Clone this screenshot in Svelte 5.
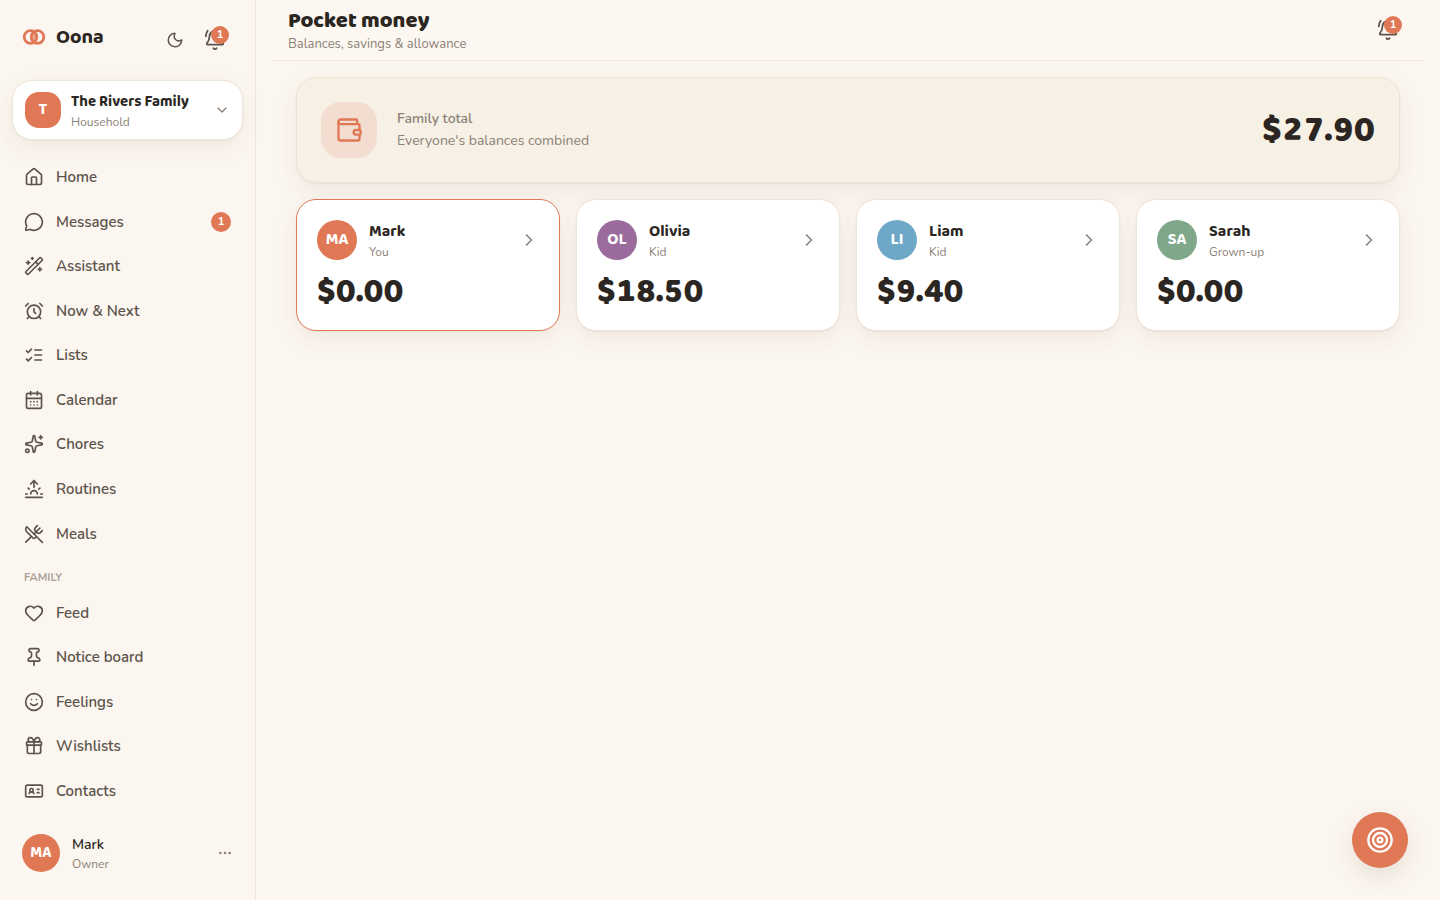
<script lang="ts">
type NavItem = { label: string; icon: string; badge?: number };
type Member = { name: string; role: string; initials: string; color: string; balance: number; me?: boolean };

const mainNav: NavItem[] = [
    { label: 'Home', icon: 'house' },
    { label: 'Messages', icon: 'message', badge: 1 },
    { label: 'Assistant', icon: 'wand' },
    { label: 'Now & Next', icon: 'alarm' },
    { label: 'Lists', icon: 'list' },
    { label: 'Calendar', icon: 'calendar' },
    { label: 'Chores', icon: 'sparkles' },
    { label: 'Routines', icon: 'sunrise' },
    { label: 'Meals', icon: 'utensils' }
];

const familyNav: NavItem[] = [
    { label: 'Feed', icon: 'heart' },
    { label: 'Notice board', icon: 'pin' },
    { label: 'Feelings', icon: 'smile' },
    { label: 'Wishlists', icon: 'gift' },
    { label: 'Contacts', icon: 'card' }
];

const members: Member[] = [
    { name: 'Mark', role: 'You', initials: 'MA', color: '#e07856', balance: 0, me: true },
    { name: 'Olivia', role: 'Kid', initials: 'OL', color: '#9b6b9e', balance: 18.5 },
    { name: 'Liam', role: 'Kid', initials: 'LI', color: '#6fa8c7', balance: 9.4 },
    { name: 'Sarah', role: 'Grown-up', initials: 'SA', color: '#7fa88b', balance: 0 }
];

// 24x24 stroke icons, one entry per path
const icons: Record<string, string[]> = {
    house: [
        'M15 21v-8a1 1 0 0 0-1-1h-4a1 1 0 0 0-1 1v8',
        'M3 10a2 2 0 0 1 .709-1.528l7-5.999a2 2 0 0 1 2.582 0l7 5.999A2 2 0 0 1 21 10v9a2 2 0 0 1-2 2H5a2 2 0 0 1-2-2z'
    ],
    message: [
        'M2.992 16.342a2 2 0 0 1 .094 1.167l-1.065 3.29a1 1 0 0 0 1.236 1.168l3.413-.998a2 2 0 0 1 1.099.092 10 10 0 1 0-4.777-4.719'
    ],
    wand: [
        'm21.64 3.64-1.28-1.28a1.21 1.21 0 0 0-1.72 0L2.36 18.64a1.21 1.21 0 0 0 0 1.72l1.28 1.28a1.2 1.2 0 0 0 1.72 0L21.64 5.36a1.2 1.2 0 0 0 0-1.72',
        'm14 7 3 3', 'M5 6v4', 'M19 14v4', 'M10 2v2', 'M7 8H3', 'M21 16h-4', 'M11 3H9'
    ],
    alarm: [
        'M4 13a8 8 0 1 0 16 0a8 8 0 1 0-16 0',
        'M12 9v4l2 2', 'M5 3 2 6', 'm22 6-3-3', 'M6.38 18.7 4 21', 'M17.64 18.67 20 21'
    ],
    list: ['m3 17 2 2 4-4', 'm3 7 2 2 4-4', 'M13 6h8', 'M13 12h8', 'M13 18h8'],
    calendar: [
        'M8 2v4', 'M16 2v4', 'M5 4h14a2 2 0 0 1 2 2v14a2 2 0 0 1-2 2H5a2 2 0 0 1-2-2V6a2 2 0 0 1 2-2z', 'M3 10h18',
        'M8 14h.01', 'M12 14h.01', 'M16 14h.01', 'M8 18h.01', 'M12 18h.01', 'M16 18h.01'
    ],
    sparkles: [
        'M11.017 2.814a1 1 0 0 1 1.966 0l1.051 5.558a2 2 0 0 0 1.594 1.594l5.558 1.051a1 1 0 0 1 0 1.966l-5.558 1.051a2 2 0 0 0-1.594 1.594l-1.051 5.558a1 1 0 0 1-1.966 0l-1.051-5.558a2 2 0 0 0-1.594-1.594l-5.558-1.051a1 1 0 0 1 0-1.966l5.558-1.051a2 2 0 0 0 1.594-1.594z',
        'M20 2v4', 'M22 4h-4', 'M2 20a2 2 0 1 0 4 0a2 2 0 1 0-4 0'
    ],
    sunrise: [
        'M12 2v8', 'm4.93 10.93 1.41 1.41', 'M2 18h2', 'M20 18h2', 'm19.07 10.93-1.41 1.41', 'M22 22H2', 'm8 6 4-4 4 4', 'M16 18a4 4 0 0 0-8 0'
    ],
    utensils: [
        'm16 2-2.3 2.3a3 3 0 0 0 0 4.2l1.8 1.8a3 3 0 0 0 4.2 0L22 8',
        'M15 15 3.3 3.3a4.2 4.2 0 0 0 0 6l7.3 7.3c.7.7 2 .7 2.8 0L15 15Zm0 0 7 7',
        'm2.1 21.8 6.4-6.3', 'm19 5-7 7'
    ],
    heart: [
        'M2 9.5a5.5 5.5 0 0 1 9.591-3.676.56.56 0 0 0 .818 0A5.49 5.49 0 0 1 22 9.5c0 2.29-1.5 4-3 5.5l-5.492 5.313a2 2 0 0 1-3 .019L5 15c-1.5-1.5-3-3.2-3-5.5'
    ],
    pin: [
        'M12 17v5',
        'M9 10.76a2 2 0 0 1-1.11 1.79l-1.78.9A2 2 0 0 0 5 15.24V16a1 1 0 0 0 1 1h12a1 1 0 0 0 1-1v-.76a2 2 0 0 0-1.11-1.79l-1.78-.9A2 2 0 0 1 15 10.76V7a1 1 0 0 1 1-1 2 2 0 0 0 0-4H8a2 2 0 0 0 0 4 1 1 0 0 1 1 1z'
    ],
    smile: ['M2 12a10 10 0 1 0 20 0a10 10 0 1 0-20 0', 'M8 14s1.5 2 4 2 4-2 4-2', 'M9 9h.01', 'M15 9h.01'],
    gift: [
        'M12 7v14', 'M20 11v8a2 2 0 0 1-2 2H6a2 2 0 0 1-2-2v-8',
        'M7.5 7a1 1 0 0 1 0-5A4.8 8 0 0 1 12 7a4.8 8 0 0 1 4.5-5 1 1 0 0 1 0 5',
        'M4 7h16a1 1 0 0 1 1 1v2a1 1 0 0 1-1 1H4a1 1 0 0 1-1-1V8a1 1 0 0 1 1-1z'
    ],
    card: [
        'M16 10h2', 'M16 14h2', 'M6.17 15a3 3 0 0 1 5.66 0', 'M7 11a2 2 0 1 0 4 0a2 2 0 1 0-4 0',
        'M4 5h16a2 2 0 0 1 2 2v10a2 2 0 0 1-2 2H4a2 2 0 0 1-2-2V7a2 2 0 0 1 2-2z'
    ],
    moon: ['M20.985 12.486a9 9 0 1 1-9.473-9.472c.405-.022.617.46.402.803a6 6 0 0 0 8.268 8.268c.344-.215.825-.004.803.401'],
    bell: [
        'M10.268 21a2 2 0 0 0 3.464 0', 'M22 8c0-2.3-.8-4.3-2-6',
        'M3.262 15.326A1 1 0 0 0 4 17h16a1 1 0 0 0 .74-1.673C19.41 13.956 18 12.499 18 8A6 6 0 0 0 6 8c0 4.499-1.411 5.956-2.738 7.326',
        'M4 2C2.8 3.7 2 5.7 2 8'
    ],
    wallet: [
        'M19 7V4a1 1 0 0 0-1-1H5a2 2 0 0 0 0 4h15a1 1 0 0 1 1 1v4h-3a2 2 0 0 0 0 4h3a1 1 0 0 0 1-1v-2a1 1 0 0 0-1-1',
        'M3 5v14a2 2 0 0 0 2 2h15a1 1 0 0 0 1-1v-4'
    ],
    down: ['m6 9 6 6 6-6'],
    right: ['m9 18 6-6-6-6'],
    dots: ['M11 12a1 1 0 1 0 2 0a1 1 0 1 0-2 0', 'M18 12a1 1 0 1 0 2 0a1 1 0 1 0-2 0', 'M4 12a1 1 0 1 0 2 0a1 1 0 1 0-2 0'],
    target: [
        'M2 12a10 10 0 1 0 20 0a10 10 0 1 0-20 0',
        'M6 12a6 6 0 1 0 12 0a6 6 0 1 0-12 0',
        'M10 12a2 2 0 1 0 4 0a2 2 0 1 0-4 0'
    ]
};

let notifications = $state(1);
let total = $derived(members.reduce((sum, m) => sum + m.balance, 0));

function money(value: number) {
    return `$${value.toFixed(2)}`;
}
</script>

{#snippet icon(name: string, size = 20)}
    <svg class="icon" width={size} height={size} viewBox="0 0 24 24" aria-hidden="true">
        {#each icons[name] as d}
            <path {d} />
        {/each}
    </svg>
{/snippet}

{#snippet bellButton()}
    <button class="icon-btn" type="button" aria-label="Notifications">
        {@render icon('bell', 22)}
        {#if notifications > 0}
            <span class="bell-badge">{notifications}</span>
        {/if}
    </button>
{/snippet}

{#snippet navLink(item: NavItem)}
    <li>
        <a class="nav-link" href="#{item.icon}">
            {@render icon(item.icon)}
            <span class="nav-label">{item.label}</span>
            {#if item.badge}
                <span class="nav-badge">{item.badge}</span>
            {/if}
        </a>
    </li>
{/snippet}

<div class="app">
    <aside class="sidebar">
        <div class="brand-row">
            <a class="brand" href="#home">
                <svg class="logo" width="24" height="24" viewBox="0 0 24 24" aria-hidden="true">
                    <path class="lens" d="M12 6.76a6.3 6.3 0 0 1 0 10.48a6.3 6.3 0 0 1 0-10.48z" />
                    <circle cx="8.5" cy="12" r="6.3" />
                    <circle cx="15.5" cy="12" r="6.3" />
                </svg>
                Oona
            </a>
            <div class="brand-actions">
                <button class="icon-btn" type="button" aria-label="Dark mode">{@render icon('moon', 18)}</button>
                {@render bellButton()}
            </div>
        </div>

        <button class="household" type="button">
            <span class="household-mark">T</span>
            <span class="stack">
                <span class="name household-name">The Rivers Family</span>
                <span class="sub">Household</span>
            </span>
            {@render icon('down', 16)}
        </button>

        <nav aria-label="Main">
            <ul>
                {#each mainNav as item}
                    {@render navLink(item)}
                {/each}
                <li class="nav-heading">Family</li>
                {#each familyNav as item}
                    {@render navLink(item)}
                {/each}
            </ul>
        </nav>

        <button class="user" type="button">
            <span class="avatar small" style="background: {members[0].color}">MA</span>
            <span class="stack">
                <span class="user-name">Mark</span>
                <span class="sub">Owner</span>
            </span>
            {@render icon('dots', 16)}
        </button>
    </aside>

    <main>
        <header class="page-header">
            <div>
                <h1>Pocket money</h1>
                <p>Balances, savings &amp; allowance</p>
            </div>
            {@render bellButton()}
        </header>

        <div class="content">
            <section class="total">
                <span class="wallet">{@render icon('wallet', 28)}</span>
                <div class="total-text">
                    <h2>Family total</h2>
                    <p>Everyone's balances combined</p>
                </div>
                <strong class="total-amount">{money(total)}</strong>
            </section>

            <section class="members">
                {#each members as m}
                    <button class="member" class:me={m.me} type="button">
                        <span class="member-top">
                            <span class="avatar" style="background: {m.color}">{m.initials}</span>
                            <span class="stack">
                                <span class="name">{m.name}</span>
                                <span class="sub">{m.role}</span>
                            </span>
                            {@render icon('right', 20)}
                        </span>
                        <span class="balance">{money(m.balance)}</span>
                    </button>
                {/each}
            </section>
        </div>
    </main>

    <button class="fab" type="button" aria-label="Focus">{@render icon('target', 28)}</button>
</div>

<style>
:global(body) {
    background: #fbf6ef;
}

.app {
    --ink: #2b2622;
    --soft: #5c534b;
    --muted: #8c8177;
    --line: #eee4d9;
    --coral: #e07856;
    --shadow: 0 1px 2px rgba(80, 55, 30, 0.05), 0 8px 24px rgba(80, 55, 30, 0.07);
    --display: "Baloo 2", "Open Sans", sans-serif;
    display: flex;
    min-height: 100vh;
    font-family: Nunito, "Open Sans", sans-serif;
    font-size: 14px;
    line-height: 22px;
    color: var(--ink);
}

* {
    box-sizing: border-box;
}

h1,
h2,
p,
ul {
    margin: 0;
    padding: 0;
}

button {
    border: 0;
    padding: 0;
    background: none;
    font: inherit;
    color: inherit;
    text-align: left;
    cursor: pointer;
}

a {
    color: inherit;
    text-decoration: none;
}

.icon {
    display: block;
    flex: none;
    fill: none;
    stroke: currentColor;
    stroke-width: 2;
    stroke-linecap: round;
    stroke-linejoin: round;
}

.sidebar {
    position: sticky;
    top: 0;
    flex: none;
    display: flex;
    flex-direction: column;
    width: 256px;
    height: 100vh;
    padding: 20px 12px 18px;
    border-right: 1px solid var(--line);
}

.brand-row {
    display: flex;
    justify-content: space-between;
    padding: 0 8px 20px 10px;
}

.brand {
    display: flex;
    align-items: center;
    gap: 10px;
    height: 34px;
    font-family: var(--display);
    font-size: 20px;
    font-weight: 700;
}

.logo {
    fill: none;
    stroke: var(--coral);
    stroke-width: 2.8;
}

.lens {
    fill: var(--coral);
    fill-opacity: 0.6;
    stroke: none;
}

.brand-actions {
    display: flex;
}

.icon-btn {
    position: relative;
    display: grid;
    place-items: center;
    width: 40px;
    height: 40px;
    color: var(--soft);
}

.bell-badge {
    position: absolute;
    top: 6px;
    right: 6px;
    width: 18px;
    height: 18px;
    border-radius: 50%;
    background: var(--coral);
    color: #fff;
    font-size: 11px;
    font-weight: 700;
    line-height: 18px;
    text-align: center;
}

.household {
    display: flex;
    align-items: center;
    gap: 10px;
    padding: 9px 12px;
    border: 1px solid var(--line);
    border-radius: 20px;
    background: #fff;
    box-shadow: var(--shadow);
}

.household .icon,
.user .icon,
.member .icon {
    color: var(--muted);
}

.household-mark {
    flex: none;
    width: 36px;
    height: 36px;
    border-radius: 14px;
    background: var(--coral);
    color: #fff;
    font-family: var(--display);
    font-size: 16px;
    font-weight: 700;
    line-height: 36px;
    text-align: center;
}

.stack {
    flex: 1;
    min-width: 0;
    display: grid;
}

.name {
    font-family: var(--display);
    font-size: 16px;
    font-weight: 700;
    line-height: 24px;
}

.household-name {
    font-size: 15px;
}

.sub {
    font-size: 12px;
    line-height: 16px;
    color: var(--muted);
}

nav {
    flex: 1;
    padding: 16px 0 12px;
}

ul {
    display: flex;
    flex-direction: column;
    justify-content: space-between;
    height: 100%;
    list-style: none;
}

.nav-link {
    display: flex;
    align-items: center;
    gap: 12px;
    padding: 10px 12px;
    color: var(--soft);
    font-size: 15px;
    font-weight: 600;
    line-height: 22px;
}

.nav-label {
    flex: 1;
}

.nav-badge {
    width: 20px;
    height: 20px;
    border-radius: 50%;
    background: var(--coral);
    color: #fff;
    font-size: 11px;
    font-weight: 700;
    line-height: 20px;
    text-align: center;
}

.nav-heading {
    padding: 13px 12px 3px;
    color: #aca196;
    font-size: 11px;
    font-weight: 700;
    line-height: 16px;
    text-transform: uppercase;
}

.user {
    display: flex;
    align-items: center;
    gap: 12px;
    padding: 10px;
}

.user-name {
    font-weight: 600;
    line-height: 22px;
}

.avatar {
    flex: none;
    width: 40px;
    height: 40px;
    border-radius: 50%;
    color: #fff;
    font-family: var(--display);
    font-size: 16px;
    font-weight: 700;
    line-height: 40px;
    text-align: center;
}

.avatar.small {
    width: 38px;
    height: 38px;
    font-size: 15px;
    line-height: 38px;
}

main {
    flex: 1;
    min-width: 0;
    padding: 0 16px;
}

.page-header {
    display: flex;
    align-items: center;
    justify-content: space-between;
    padding: 7px 16px;
    border-bottom: 1px solid #f1e9df;
    background: #fcf7f1;
}

h1 {
    font-family: var(--display);
    font-size: 22px;
    font-weight: 800;
    line-height: 28px;
}

.page-header p {
    font-size: 13px;
    line-height: 18px;
    color: var(--muted);
}

.content {
    display: grid;
    gap: 16px;
    padding: 16px 24px;
}

.total {
    display: flex;
    align-items: center;
    gap: 20px;
    padding: 24px;
    border: 1px solid #ebe3d5;
    border-radius: 20px;
    background: #f7f0e4;
    box-shadow: var(--shadow);
}

.wallet {
    display: grid;
    place-items: center;
    width: 56px;
    height: 56px;
    border-radius: 20px;
    background: #f3ddd0;
    color: var(--coral);
}

.total-text {
    flex: 1;
    color: var(--muted);
}

h2 {
    font-size: 14px;
    font-weight: 600;
    line-height: 22px;
}

.total-amount {
    font-family: var(--display);
    font-size: 35px;
    font-weight: 800;
    font-variant-numeric: tabular-nums;
    line-height: 40px;
}

.members {
    display: grid;
    grid-template-columns: repeat(auto-fill, minmax(240px, 1fr));
    gap: 16px;
}

.member {
    display: grid;
    gap: 14px;
    padding: 20px;
    border: 1px solid var(--line);
    border-radius: 20px;
    background: #fff;
    box-shadow: var(--shadow);
}

.member.me {
    border-color: var(--coral);
}

.member-top {
    display: flex;
    align-items: center;
    gap: 12px;
}

.balance {
    font-family: var(--display);
    font-size: 33px;
    font-weight: 800;
    font-variant-numeric: tabular-nums;
    line-height: 36px;
}

.fab {
    position: fixed;
    right: 32px;
    bottom: 32px;
    display: grid;
    place-items: center;
    width: 56px;
    height: 56px;
    border-radius: 50%;
    background: var(--coral);
    color: #fff;
    box-shadow: 0 8px 24px rgba(80, 55, 30, 0.12);
}
</style>
